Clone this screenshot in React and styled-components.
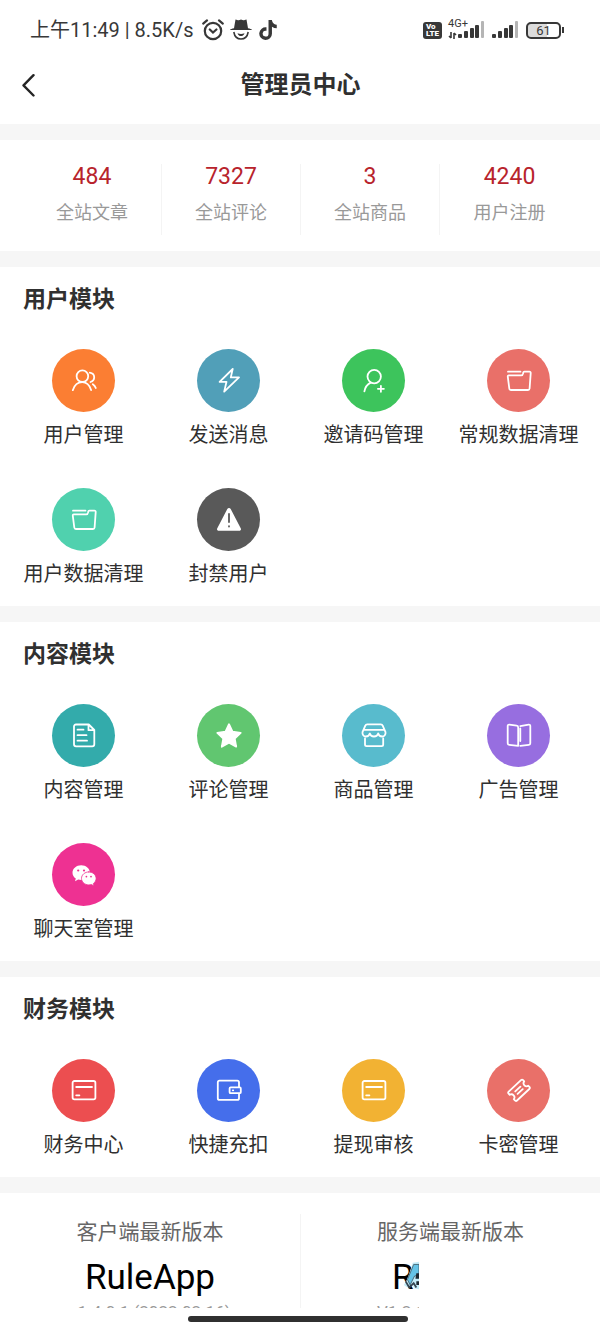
import React from 'react';
import styled, { createGlobalStyle } from "styled-components";
import { FaTiktok } from "react-icons/fa6";

const GlobalStyle = createGlobalStyle`
   * {
      box-sizing: border-box;
   }
   body {
      margin: 0;
      background: #fff;
      color: #303030;
      font-family: Roboto, "Noto Sans CJK SC", sans-serif;
   }
   button {
      border: 0;
      padding: 0;
      background: none;
      color: inherit;
      font: inherit;
      cursor: pointer;
   }
   h1, h2, p {
      margin: 0;
   }
`

const icons = {
   users: (
      <>
         <circle cx="10.4" cy="7.2" r="5.8" />
         <path d="M.8 21.2C2.4 16.3 5.8 13.2 10.2 13.2s7.4 3 8.900 7.900M17.800 3.600c2.600.4 4.400 2.200 4.400 4.700 0 2.300-1.400 4-3.700 4.700M20.800 15.200c1.400.9 2.400 2.200 3 3.800" />
      </>
   ),
   bolt: <path d="M15.7 0 2.6 12.8h6.900L7.200 22.6 22 8.400h-8.200z" />,
   userPlus: (
      <>
         <circle cx="12.2" cy="7.6" r="6.7" />
         <path d="M8.6 13.6C5.2 15.4 3 18.6 2.4 22.4M18.900 16.800v6M15.900 19.800h6" />
      </>
   ),
   folder: <path d="M1 2.700h12.500M1.800 6.400h12.400c1.300 0 1.700-.8 1.900-2l.1-.7c.1-.7.5-1.100 1.200-1.100h5c.9 0 1.400.6 1.300 1.500l-1.100 15.400c-.1 1-.7 1.500-1.600 1.500H3.900c-.9 0-1.500-.5-1.600-1.500L.8 7.800c-.1-.9.200-1.400 1-1.400z" />,
   alert: (
      <>
         <path d="M10.300 1c.8-1.400 2.600-1.400 3.400 0l10 19.200c.8 1.400 0 2.600-1.500 2.600H1.800C.3 22.800-.5 21.600.3 20.200z" fill="#fff" stroke="none" />
         <path d="M12 6v8M12 18.200v.4" stroke="#595959" />
      </>
   ),
   doc: <path d="M16.800.5H4C2.700.5 2 1.200 2 2.500v17.800c0 1.300.7 2 2 2h16.300c1.300 0 2-.7 2-2V6zM16.500.8v5.400h5.500M5.500 5.700h6M5.500 11.200h9M5.500 16.700h9.500" />,
   star: <path d="m12 .2 3.500 7.500 8.200 1.100-6 5.700 1.500 8.200-7.200-4-7.200 4 1.500-8.200-6-5.700 8.200-1.100z" fill="#fff" />,
   shop: <path d="M5.200.4h13.600c.9 0 1.600.4 1.900 1.300l2.800 6.500c.4 2.500-1.200 4.300-3.300 4.300-2 0-3.600-1.300-4-3-.5 1.800-2.100 3-4.200 3s-3.700-1.200-4.200-3c-.4 1.700-2 3-4 3C1.700 12.500.1 10.700.5 8.200l2.800-6.500C3.600.8 4.300.4 5.200.4zM2.500 5.800h19M3 14.500v6c0 1 .6 1.600 1.600 1.600h15c1 0 1.600-.6 1.600-1.600v-6" />,
   book: <path d="M11.200 21.600V3.400c0-1-.5-1.600-1.500-1.700L2.300.6C1.300.5.700 1 .7 2v17.200c0 1 .5 1.600 1.500 1.700l9 .9M13.300 2.100 21.700.6c1-.1 1.600.4 1.600 1.400v17.200c0 1-.5 1.600-1.500 1.700l-8.500.9M13.300 4.500v12.500" />,
   chat: (
      <g stroke="none" fill="#fff">
         <path d="M9.200 2.200C4.400 2.200.500 5.500.500 9.700c0 2.400 1.300 4.500 3.300 5.800L3 18.300l3.200-1.700c1 .3 2 .5 3 .5 4.800 0 8.700-3.200 8.700-7.400s-3.900-7.500-8.700-7.500z" />
         <path d="M16.800 8.900c-4 0-7.300 2.900-7.300 6.500s3.300 6.500 7.300 6.500c.9 0 1.800-.2 2.600-.4l2.600 1.400-.6-2.400c1.600-1.200 2.700-3 2.700-5.100 0-3.600-3.300-6.500-7.300-6.500z" stroke="#ee3192" strokeWidth=".8" />
         <g fill="#ee3192">
            <circle cx="6.200" cy="7.500" r="1.100" />
            <circle cx="12" cy="7.500" r="1.100" />
            <circle cx="14.400" cy="13.600" r=".9" />
            <circle cx="19" cy="13.600" r=".9" />
         </g>
      </g>
   ),
   card: (
      <>
         <rect x=".6" y="2" width="22.800" height="18.400" rx="1.800" />
         <path d="M4.200 8h15.800M4.200 16.300h3.200" />
      </>
   ),
   wallet: (
      <>
         <path d="M22 7.700V3.400c0-1-.6-1.700-1.700-1.700H2.500C1.400 1.700.8 2.400.8 3.400v15.800c0 1 .6 1.700 1.700 1.700h17.800c1.100 0 1.700-.7 1.700-1.700v-4.500" />
         <rect x="12.600" y="8.400" width="11.200" height="5.800" rx="1" />
         <path d="M15.800 11.300h.4" />
      </>
   ),
   ticket: (
      <g transform="rotate(-43 12 11.300)">
         <path d="M3.600 5.200h16.800c1 0 1.500.5 1.500 1.500v1.600c-3.400.6-3.400 5.400 0 6v1.600c0 1-.5 1.500-1.500 1.500H3.600c-1 0-1.500-.5-1.500-1.500v-1.600c3.400-.6 3.400-5.400 0-6V6.700c0-1 .5-1.500 1.500-1.500zM8.500 9.600h7M8.500 13h7" />
      </g>
   ),
}

const stats = [
   { value: '484', label: '全站文章' },
   { value: '7327', label: '全站评论' },
   { value: '3', label: '全站商品' },
   { value: '4240', label: '用户注册' },
]

const modules = [
   {
      title: '用户模块',
      items: [
         { label: '用户管理', icon: 'users', color: '#fb7e33' },
         { label: '发送消息', icon: 'bolt', color: '#519fb8' },
         { label: '邀请码管理', icon: 'userPlus', color: '#3dc45c' },
         { label: '常规数据清理', icon: 'folder', color: '#e97069' },
         { label: '用户数据清理', icon: 'folder', color: '#50d1ae' },
         { label: '封禁用户', icon: 'alert', color: '#595959' },
      ],
   },
   {
      title: '内容模块',
      items: [
         { label: '内容管理', icon: 'doc', color: '#33abab' },
         { label: '评论管理', icon: 'star', color: '#61c670' },
         { label: '商品管理', icon: 'shop', color: '#58bbcd' },
         { label: '广告管理', icon: 'book', color: '#976ee0' },
         { label: '聊天室管理', icon: 'chat', color: '#ee3192' },
      ],
   },
   {
      title: '财务模块',
      items: [
         { label: '财务中心', icon: 'card', color: '#ec4e50' },
         { label: '快捷充扣', icon: 'wallet', color: '#456eeb' },
         { label: '提现审核', icon: 'card', color: '#f2b233' },
         { label: '卡密管理', icon: 'ticket', color: '#e97069' },
      ],
   },
]

const Signal = () => (
   <svg width="28" height="18" viewBox="0 0 28 18" fill="#383838">
      <rect x="0" y="13" width="4" height="4" rx="1" />
      <rect x="6" y="10" width="4" height="7" rx="1" />
      <rect x="12" y="7" width="4" height="10" rx="1" />
      <rect x="17" y="4" width="4" height="13" rx="1" />
      <rect x="23" y="0" width="3" height="17" rx="1" fill="#b5b5b5" />
   </svg>
)

const App = () => {
   return (
      <Page>
         <GlobalStyle />
         <StatusBar>
            <StatusGroup $gap={8}>
               <span>上午11:49 | 8.5K/s</span>
               <StatusIcons>
                  <svg width="22" height="22" viewBox="0 0 22 22" fill="none" stroke="#383838" strokeWidth="2.2" strokeLinecap="round">
                     <circle cx="11" cy="12" r="8.2" />
                     <path d="M1.200 4.600 5 1.400M20.800 4.600 17 1.400M7.800 10.500l3.200 3 3.400-3" />
                  </svg>
                  <svg width="22" height="22" viewBox="0 0 22 22" fill="#383838">
                     <path d="M5.500.5c3 1 3.500.8 5.500 0 2 .8 2.500 1 5.500 0L18 9.300c2 .3 3.500.8 4 1.700H0c.5-.9 2-1.400 4-1.700z" />
                     <path d="M7.500 14.200c2.300.9 4.700.9 7 0-.5 1.800-1.800 2.900-3.500 2.900s-3-1.100-3.500-2.900z" />
                     <path d="M3.800 13c.8 4.500 3.500 7 7.200 7s6.400-2.500 7.200-7" fill="none" stroke="#383838" strokeWidth="1.6" />
                  </svg>
                  <FaTiktok size={20} />
               </StatusIcons>
            </StatusGroup>
            <StatusGroup $gap={6}>
               <Volte><span>Vo</span><span>LTE</span></Volte>
               <Network>
                  <NetworkType>
                     <span>4G+</span>
                     <svg width="9" height="7" viewBox="0 0 9 7" stroke="#383838">
                        <path d="M3 0v6M1 4l2 2M6 7V1M8 3 6 1" fill="none" strokeWidth="1.6" />
                     </svg>
                  </NetworkType>
                  <Signal />
               </Network>
               <Signal />
               <Battery><BatteryLevel>61</BatteryLevel></Battery>
            </StatusGroup>
         </StatusBar>
         <NavBar>
            <BackButton aria-label="返回">
               <svg width="14" height="24" viewBox="0 0 14 24" fill="none" stroke="#252525" strokeWidth="2.4" strokeLinecap="round" strokeLinejoin="round">
                  <path d="M11.500 2.200 1.500 12.300l10 10.200" />
               </svg>
            </BackButton>
            <NavTitle>管理员中心</NavTitle>
         </NavBar>
         <Content>
            <Stats>
               {stats.map((stat) => (
                  <Stat key={stat.label}>
                     <StatValue>{stat.value}</StatValue>
                     <StatLabel>{stat.label}</StatLabel>
                  </Stat>
               ))}
            </Stats>
            {modules.map((module) => (
               <Module key={module.title}>
                  <ModuleTitle>{module.title}</ModuleTitle>
                  <ModuleGrid>
                     {module.items.map((item) => (
                        <ModuleItem key={item.label}>
                           <IconCircle $color={item.color}>
                              <svg width="26" height="26" viewBox="-1 -1 26 26" fill="none" stroke="#fff" strokeWidth="1.8" strokeLinecap="round" strokeLinejoin="round">
                                 {icons[item.icon]}
                              </svg>
                           </IconCircle>
                           <span>{item.label}</span>
                        </ModuleItem>
                     ))}
                  </ModuleGrid>
               </Module>
            ))}
            <Versions>
               <Version>
                  <VersionLabel>客户端最新版本</VersionLabel>
                  <VersionName>RuleApp</VersionName>
                  <VersionNumber>v1.4.0.1 (2022.02.16)</VersionNumber>
               </Version>
               <Version>
                  <VersionLabel>服务端最新版本</VersionLabel>
                  <Clipped>
                     <VersionName $indent={91}>
                        Ru
                        <Sticker width="16" height="32" viewBox="0 0 18 32">
                           <path d="M11 1 18 0v31l-5-1-3-5-5 4-4-3 4-7z" fill="#c4ecf8" />
                           <path d="m12 3-7 17 3 6 5-10 5-1V3z" fill="#65c3e6" stroke="#40606f" />
                           <path d="m3 22 4 7 5-5 3 5" fill="none" stroke="#354450" strokeWidth="2" />
                           <path d="M15 13h3v6h-4zM15 22h3v4h-3z" fill="#1c2830" />
                        </Sticker>
                     </VersionName>
                     <VersionNumber $indent={76}>V1.2.1</VersionNumber>
                  </Clipped>
               </Version>
            </Versions>
         </Content>
         <HomeArea><HomeBar /></HomeArea>
      </Page>
   )

}

const Page = styled.div`
   display: flex;
   flex-direction: column;
   height: 100vh;
   overflow: hidden;
`
const StatusBar = styled.div`
   display: flex;
   flex: none;
   justify-content: space-between;
   padding: 14px 36px 0 30px;
   font-size: 20px;
   line-height: 32px;
   color: #383838;
   white-space: nowrap;
`
const StatusGroup = styled.div`
   display: flex;
   align-items: center;
   height: 32px;
   gap: ${(props) => props.$gap}px;
`
const StatusIcons = styled.div`
   display: flex;
   align-items: center;
   gap: 6px;
`
const Volte = styled.div`
   display: flex;
   flex-direction: column;
   justify-content: center;
   width: 19px;
   height: 17px;
   padding-left: 3px;
   border-radius: 3px;
   background: #383838;
   color: #fff;
   font-size: 8px;
   font-weight: 900;
   line-height: 7px;
`
const Network = styled.div`
   display: flex;
   align-items: center;
`
const NetworkType = styled.div`
   display: flex;
   flex-direction: column;
   width: 10px;
   height: 24px;
   font-size: 11px;
   line-height: 12px;
   gap: 2px;
`
const Battery = styled.div`
   display: flex;
   align-items: center;
   &::after {
      content: "";
      width: 2px;
      height: 6px;
      margin-left: 1px;
      background: #383838;
   }
`
const BatteryLevel = styled.div`
   width: 35px;
   height: 17px;
   border: 2px solid #383838;
   border-radius: 5px;
   background: linear-gradient(90deg, #dcdcdc 60%, #fff 60%);
   font-size: 13px;
   line-height: 14px;
   text-align: center;
`
const NavBar = styled.header`
   display: grid;
   flex: none;
   grid-template-columns: 1fr auto 1fr;
   align-items: center;
   height: 78px;
   padding: 0 21px 0 22px;
`
const BackButton = styled.button`
   display: flex;
   width: 32px;
`
const NavTitle = styled.h1`
   font-size: 24px;
   font-weight: 700;
   line-height: 32px;
`
const Content = styled.main`
   flex: 1;
   min-height: 0;
   overflow: hidden;
`
const Panel = styled.section`
   border-top: 16px solid #f6f6f6;
`
const Stats = styled(Panel)`
   display: grid;
   grid-template-columns: repeat(4, 1fr);
   padding: 24px 21px 16px 23px;
`
const Stat = styled.div`
   display: flex;
   flex-direction: column;
   gap: 10px;
   height: 71px;
   border-right: 1px solid #f4f4f4;
   text-align: center;
   line-height: 26px;
   &:last-child {
      border-right: 0;
   }
`
const StatValue = styled.span`
   font-size: 23px;
   color: #b8232c;
`
const StatLabel = styled.span`
   font-size: 18px;
   color: #999;
`
const Module = styled(Panel)`
   padding: 17px 9px 18px 11px;
`
const ModuleTitle = styled.h2`
   padding-left: 12px;
   margin-bottom: 33px;
   font-size: 23px;
   font-weight: 700;
   line-height: 32px;
`
const ModuleGrid = styled.div`
   display: grid;
   grid-template-columns: repeat(4, 1fr);
   row-gap: 39px;
`
const ModuleItem = styled.button`
   display: flex;
   flex-direction: column;
   align-items: center;
   gap: 9px;
   font-size: 20px;
   line-height: 28px;
   white-space: nowrap;
`
const IconCircle = styled.span`
   display: flex;
   align-items: center;
   justify-content: center;
   width: 63px;
   height: 63px;
   border-radius: 50%;
   background: ${(props) => props.$color};
`
const Versions = styled(Panel)`
   display: grid;
   grid-template-columns: repeat(2, 1fr);
   padding-top: 21px;
`
const Version = styled.div`
   text-align: center;
   & + & {
      border-left: 1px solid #f4f4f4;
   }
`
const VersionLabel = styled.p`
   font-size: 21px;
   line-height: 36px;
   color: #666;
`
const VersionName = styled.p`
   padding-left: ${(props) => props.$indent || 0}px;
   font-size: 35px;
   line-height: 56px;
   color: #000;
`
const VersionNumber = styled.p`
   padding-left: ${(props) => props.$indent || 0}px;
   font-size: 17px;
   line-height: 12px;
   color: #999;
`
const Clipped = styled.div`
   position: relative;
   width: 118px;
   overflow: hidden;
   text-align: left;
   white-space: nowrap;
`
const Sticker = styled.svg`
   position: absolute;
   top: 10px;
   right: 0;
`
const HomeArea = styled.footer`
   display: flex;
   flex: none;
   justify-content: center;
   height: 25px;
   padding: 8px 4px 0 0;
`
const HomeBar = styled.div`
   width: 37%;
   height: 6px;
   border-radius: 3px;
   background: #303030;
`

export default App;
